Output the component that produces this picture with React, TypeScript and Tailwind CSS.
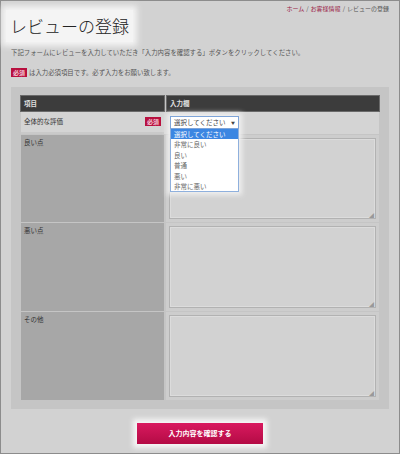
const jp = { fontFamily: '"Noto Sans CJK JP", "Noto Sans", sans-serif' };

const options = ["選択してください", "非常に良い", "良い", "普通", "悪い", "非常に悪い"];

function Badge() {
  return (
    <span className="inline-flex h-[9px] items-center bg-[#b8103f] px-[2px] text-[6px] font-bold leading-none text-[#f3c9d6]">
      必須
    </span>
  );
}

function TextRow({ label, h }: { label: string; h: string }) {
  return (
    <div className={`flex gap-[2px] ${h}`}>
      <div className="w-[143px] shrink-0 bg-[#a7a7a7] px-[3px] pt-[3px] text-[6.5px] text-[#333]">{label}</div>
      <div className="flex-1 bg-[#cdcdcd] p-[3px] pr-[3px]">
        <div className="relative h-full border border-[#b2b2b2] bg-[#d2d2d2] shadow-[inset_0_0_0_1px_#dcdcdc]">
          <span className="absolute bottom-[1px] right-[1px] text-[5px] leading-none text-[#999]">◢</span>
        </div>
      </div>
    </div>
  );
}

export default function App() {
  return (
    <div style={jp} className="flex h-[454px] w-[400px] flex-col border border-[#8c8c8c] bg-[#d2d2d2] text-[#555]">
      {/* breadcrumb */}
      <div className="flex justify-end pr-[10px] pt-[4px] text-[6px] leading-[8px]">
        <span className="text-[#9a1b46]">ホーム</span>
        <span className="px-[2px]">/</span>
        <span className="text-[#9a1b46]">お客様情報</span>
        <span className="px-[2px]">/</span>
        <span>レビューの登録</span>
      </div>

      <div className="ml-[5px] mt-[-3px] w-fit bg-[#f4f4f4] px-[4px] py-[5px] shadow-[0_0_6px_4px_#f4f4f4]">
        <h1 className="text-[17px] font-light leading-[22px] text-[#222]">レビューの登録</h1>
      </div>

      <p className="ml-[10px] mt-[6px] text-[6.4px] leading-[9px] text-[#555]">
        下記フォームにレビューを入力していただき「入力内容を確認する」ボタンをクリックしてください。
      </p>
      <p className="ml-[10px] mt-[11px] flex items-center gap-[2px] text-[6.4px] leading-[9px] text-[#555]">
        <Badge />
        は入力必須項目です。必ず入力をお願い致します。
      </p>

      {/* form panel */}
      <div className="mx-[10px] mt-[10px] bg-[#c5c5c5] px-[10px] pb-[9px] pt-[9px]">
        <div className="flex flex-col gap-[1px]">
          <div className="flex h-[15px] gap-[3px]">
            <div className="flex w-[143px] shrink-0 items-center bg-[#3c3c3c] px-[3px] text-[6.5px] font-bold text-[#e0e0e0] shadow-[0_0_0_1px_#6a6a6a]">
              項目
            </div>
            <div className="flex flex-1 items-center bg-[#3c3c3c] px-[3px] text-[6.5px] font-bold text-[#e0e0e0] shadow-[0_0_0_1px_#6a6a6a]">
              入力欄
            </div>
          </div>

          <div className="flex h-[22px] gap-[2px] bg-[#d6d6d6]">
            <div className="flex w-[143px] shrink-0 items-start justify-between border-b-2 border-[#c9c9c9] bg-[#d4d4d4] px-[3px] pt-[5px] text-[6.5px] text-[#333]">
              <span>全体的な評価</span>
              <Badge />
            </div>
            <div className="relative flex-1 bg-[#d4d4d4] pl-[4px] pt-[4px]">
              <div className="relative z-10 w-[69px] shadow-[0_0_5px_3px_#f0f0f0]">
                <div className="flex h-[13px] items-center justify-between border border-[#7ea4d8] bg-white px-[3px] text-[6.5px] text-[#444]">
                  <span>選択してください</span>
                  <span className="text-[4px]">▼</span>
                </div>
                <div className="border border-t-0 border-[#8fb0dd] bg-white">
                  {options.map((o, i) => (
                    <div
                      key={o}
                      className={`h-[10.4px] px-[3px] text-[6.5px] leading-[10.4px] ${
                        i === 0 ? "bg-[#3b86e2] text-white" : "text-[#666]"
                      }`}
                    >
                      {o}
                    </div>
                  ))}
                </div>
              </div>
            </div>
          </div>

          <TextRow label="良い点" h="h-[87px]" />
          <TextRow label="悪い点" h="h-[88px]" />
          <TextRow label="その他" h="h-[88px]" />
        </div>
      </div>

      {/* submit */}
      <div className="mt-[14px] flex justify-center">
        <button className="h-[21px] w-[126px] bg-gradient-to-b from-[#d9195f] to-[#b40b45] text-[7px] font-bold text-white shadow-[0_0_5px_4px_#f6f6f6]">
          入力内容を確認する
        </button>
      </div>
    </div>
  );
}
